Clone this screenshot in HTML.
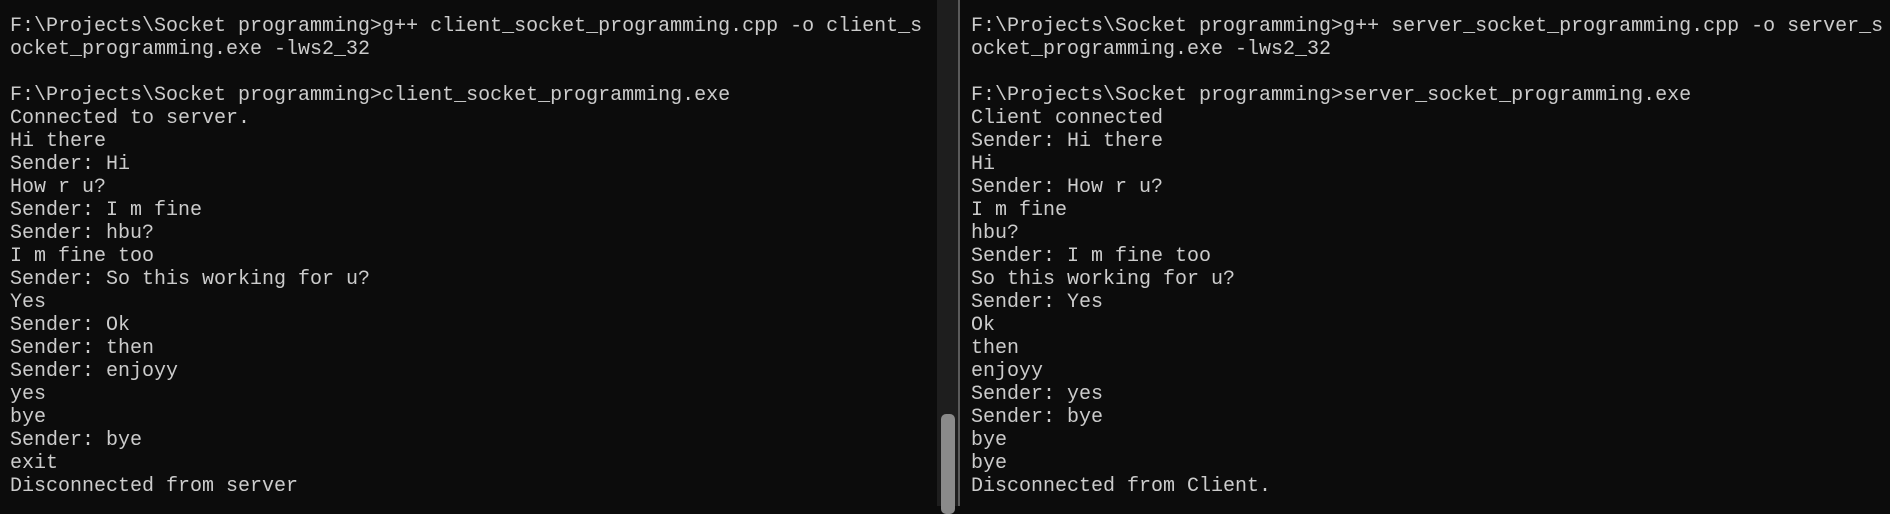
<!DOCTYPE html>
<html><head><meta charset="utf-8"><style>
html,body{margin:0;padding:0;background:#0c0c0c;width:1890px;height:506px;overflow:hidden}
pre{position:absolute;margin:0;top:15px;font-family:"Liberation Mono",monospace;font-size:20px;line-height:23px;color:#cccccc;white-space:pre}
#l{left:10px}#r{left:971px}
#track{position:absolute;left:937px;top:0;width:21px;height:506px;background:#1e1e1e}
#thumb{position:absolute;left:941px;top:414px;width:14px;height:100px;background:#8a8a8a;border-radius:5px}
#div{position:absolute;left:958px;top:0;width:2px;height:506px;background:#5a5a5a}
</style></head><body>
<div id="track"></div><div id="thumb"></div><div id="div"></div>
<pre id="l">F:\Projects\Socket programming>g++ client_socket_programming.cpp -o client_s
ocket_programming.exe -lws2_32

F:\Projects\Socket programming>client_socket_programming.exe
Connected to server.
Hi there
Sender: Hi
How r u?
Sender: I m fine
Sender: hbu?
I m fine too
Sender: So this working for u?
Yes
Sender: Ok
Sender: then
Sender: enjoyy
yes
bye
Sender: bye
exit
Disconnected from server</pre>
<pre id="r">F:\Projects\Socket programming>g++ server_socket_programming.cpp -o server_s
ocket_programming.exe -lws2_32

F:\Projects\Socket programming>server_socket_programming.exe
Client connected
Sender: Hi there
Hi
Sender: How r u?
I m fine
hbu?
Sender: I m fine too
So this working for u?
Sender: Yes
Ok
then
enjoyy
Sender: yes
Sender: bye
bye
bye
Disconnected from Client.</pre>
</body></html>
